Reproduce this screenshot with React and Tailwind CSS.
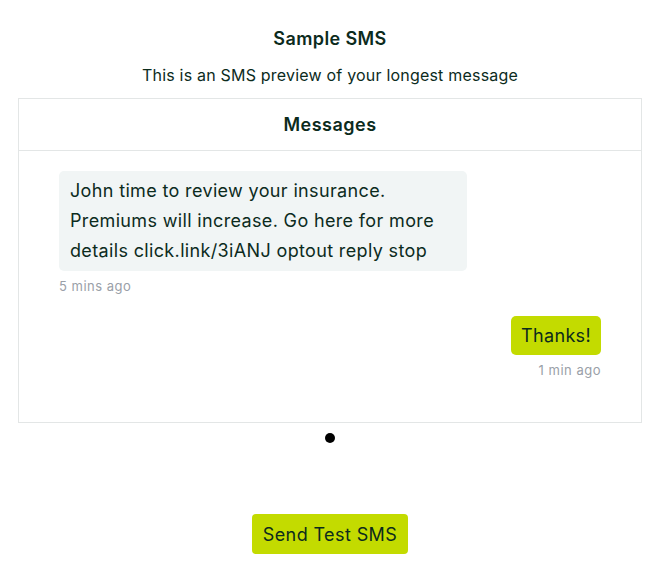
export default function App() {
  return (
    <div className="w-[660px] h-[570px] bg-white flex flex-col items-center pt-[27px] text-[#0c2b1d]" style={{ fontFamily: 'Inter, "Noto Sans", sans-serif' }}>
      <h1 className="text-[18px] leading-[24px] font-semibold tracking-[0.4px]">Sample SMS</h1>
      <p className="mt-[12px] text-[16px] leading-[24px] tracking-[0.2px]">This is an SMS preview of your longest message</p>

      <div className="mt-[11px] w-[624px] border border-[#e3e6e6]">
        <div className="h-[52px] flex items-center justify-center border-b border-[#e3e6e6] text-[18px] font-semibold tracking-[0.5px]">
          Messages
        </div>
        <div className="pt-[20px] pb-[43px] px-[40px] flex flex-col">
          <div className="self-start">
            <div className="w-[408px] bg-[#f1f5f5] rounded-[5px] px-[11px] py-[5px] text-[18px] leading-[30px] tracking-[0.35px]">
              John time to review your insurance. Premiums will increase. Go here for more details click.link/3iANJ optout reply stop
            </div>
            <div className="mt-[6px] text-[13px] leading-[18px] tracking-[0.5px] text-[#9aa0a8]">5 mins ago</div>
          </div>
          <div className="self-end mt-[21px] flex flex-col items-end">
            <div className="bg-[#c3db00] rounded-[5px] px-[10px] h-[39px] flex items-center text-[18px] tracking-[0.35px]">Thanks!</div>
            <div className="mt-[6px] text-[13px] leading-[18px] tracking-[0.5px] text-[#9aa0a8]">1 min ago</div>
          </div>
        </div>
      </div>

      <div className="mt-[10px] w-[10px] h-[10px] rounded-full bg-black"></div>

      <button className="mt-[71px] h-[40px] px-[11px] rounded-[4px] bg-[#c3db00] text-[18px] tracking-[0.4px] text-[#0c2b1d]">
        Send Test SMS
      </button>
    </div>
  );
}
